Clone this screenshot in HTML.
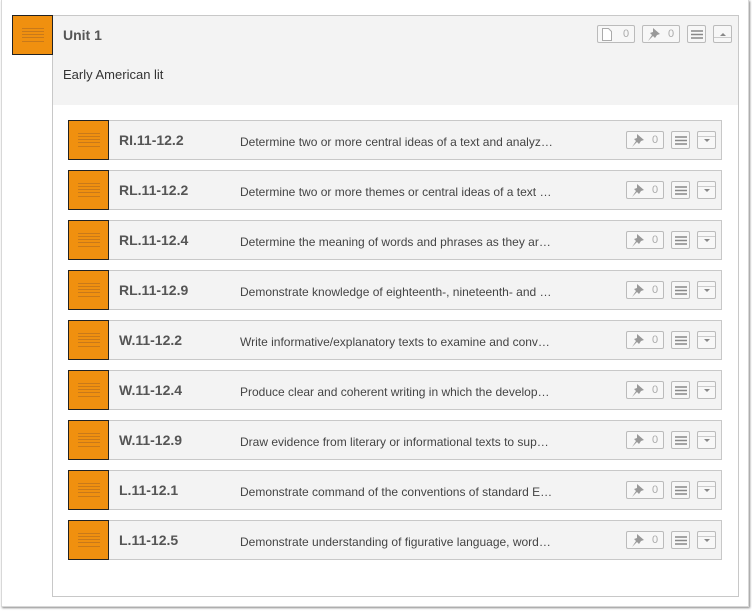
<!DOCTYPE html><html><head><style>
body{margin:0;width:752px;height:611px;background:#fff;font-family:"Liberation Sans",sans-serif;position:relative;overflow:hidden}
.frame{position:absolute;left:1px;top:0;width:746px;height:606px;border:1px solid #d8d8d8;border-top:none;box-shadow:1px 1px 2px #888}
.panel{position:absolute;left:52px;top:15px;width:685px;height:580px;border:1px solid #c8c8c8;background:#fff}
.head{position:absolute;left:0;top:0;width:685px;height:89px;background:#f3f3f3}
.sq{position:absolute;background:#f0900f;border:1px solid #222;box-sizing:border-box}
.sq i{position:absolute;left:9px;width:22px;height:1px;background:#c8791a;display:block}
.box{position:absolute;border:1px solid #bbb;border-radius:2px;background:#f7f7f7;box-sizing:border-box}
.cnt{position:absolute;font-size:11px;color:#aaa}
.row{position:absolute;left:108px;width:614px;height:40px;border:1px solid #c8c8c8;background:#f3f3f3;box-sizing:border-box}
.code{position:absolute;left:10px;top:11px;font-weight:bold;font-size:14px;color:#555}
.desc{position:absolute;left:131px;top:14px;font-size:12px;color:#444}
</style></head><body>
<div class="frame"></div>
<div class="panel"><div class="head">
<div style="position:absolute;left:10px;top:11px;font-weight:bold;font-size:14px;color:#555">Unit 1</div>
<div style="position:absolute;left:10px;top:51px;font-size:13px;color:#333">Early American lit</div>
</div></div>
<div id="c"></div>
<script>
function sq(x,y){return `<div class="sq" style="left:${x}px;top:${y}px;width:41px;height:40px">${[12,15,18,21,25].map(t=>`<i style="top:${t}px"></i>`).join('')}</div>`}
function pin(x,y){return `<div class="box" style="left:${x}px;top:${y}px;width:38px;height:18px"><svg style="position:absolute;left:3px;top:1px" width="16" height="15" viewBox="0 0 16 15"><path d="M7 1l7 6-3 1-2 3-2-2-5 5 4-6-2-2 3-1z" fill="#999"/></svg><span class="cnt" style="left:25px;top:2px">0</span></div>`}
function doc(x,y){return `<div class="box" style="left:${x}px;top:${y}px;width:38px;height:18px"><svg style="position:absolute;left:3px;top:2px" width="12" height="13"><path d="M1.5 .5h6l3 3v9h-9z" fill="#fff" stroke="#aaa"/></svg><span class="cnt" style="left:25px;top:2px">0</span></div>`}
function ham(x,y){return `<div class="box" style="left:${x}px;top:${y}px;width:19px;height:18px"><svg style="position:absolute;left:2px;top:2px" width="14" height="13"><path d="M1 3h12M1 6.5h12M1 10h12" stroke="#888" stroke-width="1.5"/></svg></div>`}
function dd(x,y,up){return `<div class="box" style="left:${x}px;top:${y}px;width:19px;height:18px"><div style="position:absolute;left:0;right:0;top:${up?11:4}px;border-top:1px solid #ccc"></div><div style="position:absolute;left:6px;top:7px;width:0;height:0;border-left:3px solid transparent;border-right:3px solid transparent;${up?'border-bottom':'border-top'}:3px solid #888"></div></div>`}
var h=sq(12,15)+doc(597,25)+pin(642,25)+ham(687,25)+dd(713,25,1);
var rows=[["RI.11-12.2","Determine two or more central ideas of a text and analyz…"],["RL.11-12.2","Determine two or more themes or central ideas of a text …"],["RL.11-12.4","Determine the meaning of words and phrases as they ar…"],["RL.11-12.9","Demonstrate knowledge of eighteenth-, nineteenth- and …"],["W.11-12.2","Write informative/explanatory texts to examine and conv…"],["W.11-12.4","Produce clear and coherent writing in which the develop…"],["W.11-12.9","Draw evidence from literary or informational texts to sup…"],["L.11-12.1","Demonstrate command of the conventions of standard E…"],["L.11-12.5","Demonstrate understanding of figurative language, word…"]];
rows.forEach((r,i)=>{var y=120+50*i;h+=`<div class="row" style="top:${y}px"><div class="code">${r[0]}</div><div class="desc">${r[1]}</div></div>`+sq(68,y)+pin(626,y+11)+ham(671,y+11)+dd(697,y+11,0)});
document.getElementById('c').innerHTML=h;
</script>
</body></html>
